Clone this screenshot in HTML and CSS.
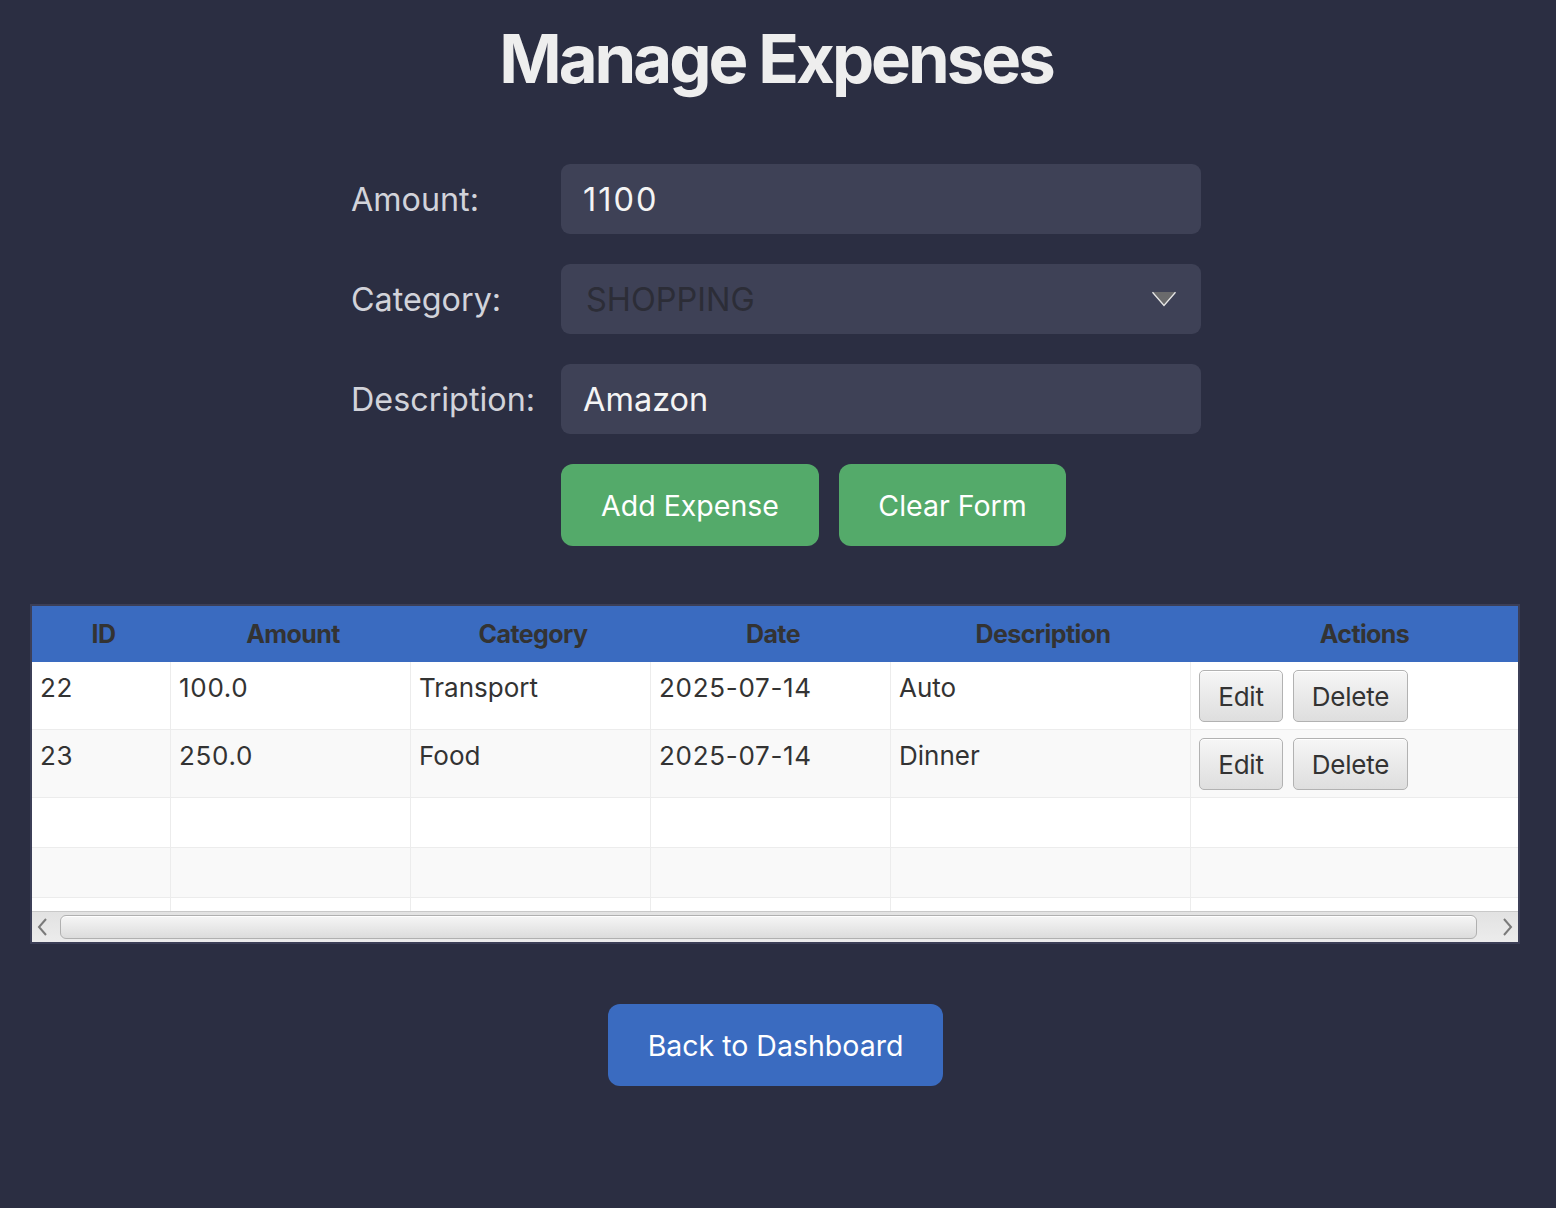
FILE: index.html
```html
<!DOCTYPE html>
<html lang="en">
<head>
<meta charset="utf-8">
<title>Manage Expenses</title>
<link rel="stylesheet" href="styles.css">
</head>
<body>
<main class="page">
  <h1 class="title">Manage Expenses</h1>

  <form class="form">
    <label class="label">Amount:</label>
    <div class="field"><span class="value num">1100</span></div>

    <label class="label">Category:</label>
    <div class="field select">
      <span class="placeholder">SHOPPING</span>
      <svg class="arrow" width="26" height="16" viewBox="0 0 26 16">
        <polygon points="1,1 25,1 13,15" fill="#6a6a6c"/>
        <polyline points="1.5,1.2 13,14.5 24.5,1.2" fill="none" stroke="#e6e6e6" stroke-width="1.3"/>
      </svg>
    </div>

    <label class="label">Description:</label>
    <div class="field"><span class="value">Amazon</span></div>

    <div class="actions-row">
      <button type="button" class="btn btn-green">Add Expense</button>
      <button type="button" class="btn btn-green">Clear Form</button>
    </div>
  </form>

  <section class="table">
    <div class="thead">
      <div class="th">ID</div>
      <div class="th">Amount</div>
      <div class="th">Category</div>
      <div class="th">Date</div>
      <div class="th">Description</div>
      <div class="th th-actions">Actions</div>
    </div>
    <div class="tbody">
      <div class="tr tall">
        <div class="td num">22</div>
        <div class="td num">100.0</div>
        <div class="td">Transport</div>
        <div class="td num">2025-07-14</div>
        <div class="td">Auto</div>
        <div class="td td-actions"><button type="button" class="cell-btn">Edit</button><button type="button" class="cell-btn">Delete</button></div>
      </div>
      <div class="tr tall odd">
        <div class="td num">23</div>
        <div class="td num">250.0</div>
        <div class="td">Food</div>
        <div class="td num">2025-07-14</div>
        <div class="td">Dinner</div>
        <div class="td td-actions"><button type="button" class="cell-btn">Edit</button><button type="button" class="cell-btn">Delete</button></div>
      </div>
      <div class="tr">
        <div class="td"></div><div class="td"></div><div class="td"></div><div class="td"></div><div class="td"></div><div class="td"></div>
      </div>
      <div class="tr odd">
        <div class="td"></div><div class="td"></div><div class="td"></div><div class="td"></div><div class="td"></div><div class="td"></div>
      </div>
      <div class="tr">
        <div class="td"></div><div class="td"></div><div class="td"></div><div class="td"></div><div class="td"></div><div class="td"></div>
      </div>
    </div>
    <div class="hscroll">
      <svg class="sarrow" width="12" height="20" viewBox="0 0 12 20"><polyline points="10,2 3,10 10,18" fill="none" stroke="#7a7a7a" stroke-width="2"/></svg>
      <div class="thumb"></div>
      <svg class="sarrow" width="12" height="20" viewBox="0 0 12 20"><polyline points="2,2 9,10 2,18" fill="none" stroke="#7a7a7a" stroke-width="2"/></svg>
    </div>
  </section>

  <div class="back-wrap">
    <button type="button" class="btn btn-blue">Back to Dashboard</button>
  </div>
</main>
</body>
</html>
```

FILE: styles.css
```css
* { box-sizing: border-box; }

html, body {
  margin: 0;
  padding: 0;
  background: #2b2e42;
  font-family: Inter, "Noto Sans", "Liberation Sans", sans-serif;
}

.page {
  width: 1556px;
  min-height: 1208px;
  display: flex;
  flex-direction: column;
  align-items: flex-start;
}

.title {
  align-self: center;
  margin: 18px 4px 64px 0;
  height: 82px;
  line-height: 82px;
  font-size: 67px;
  font-weight: 700;
  letter-spacing: -3px;
  color: #eeeeee;
}

.form {
  align-self: center;
  display: grid;
  grid-template-columns: 210px 640px;
  row-gap: 30px;
  padding-right: 4px;
  align-items: center;
}

.label {
  font-size: 32.3px;
  color: #d2d3da;
}

.field {
  height: 70px;
  background: #3e4156;
  border-radius: 9px;
  display: flex;
  align-items: center;
  padding-left: 22px;
  padding-right: 24px;
  font-size: 32.5px;
}

.value {
  color: #f4f4f4;
}

.value.num { letter-spacing: 2px; }

.select {
  padding-left: 25px;
  justify-content: space-between;
}

.placeholder {
  color: #2c2d37;
}

.arrow { display: block; }

.actions-row {
  grid-column: 2;
  display: flex;
  gap: 20px;
}

.btn {
  font-family: Inter, "Noto Sans", "Liberation Sans", sans-serif;
  font-size: 28.5px;
  color: #ffffff;
  border: none;
  border-radius: 12px;
  height: 82px;
  padding: 0;
  cursor: pointer;
}

.btn-green { background: #54aa6a; }
.actions-row .btn:first-child { width: 258px; }
.actions-row .btn:last-child { width: 227px; }

.btn-blue {
  background: #3a6bc0;
  width: 335px;
}

.table {
  margin: 58px 0 0 30px;
  width: 1490px;
  border: 2px solid #3c3f57;
  background: #ffffff;
  display: flex;
  flex-direction: column;
}

.thead, .tr {
  display: grid;
  grid-template-columns: 139px 240px 240px 240px 300px 327px;
}

.thead {
  height: 56px;
  background: #3a6bc0;
}

.th {
  display: flex;
  align-items: center;
  justify-content: center;
  padding-left: 4px;
  font-size: 25px;
  font-weight: 700;
  color: #333333;
  letter-spacing: -0.6px;
}

.th-actions { padding-left: 20px; }

.tbody {
  height: 249px;
  overflow: hidden;
}

.tr {
  height: 50px;
  background: #ffffff;
  border-bottom: 1px solid #ececec;
}

.tr.tall { height: 68px; }
.tr.odd { background: #f9f9f9; }

.td {
  border-right: 1px solid #ececec;
  padding: 10px 0 0 8px;
  font-size: 26px;
  color: #333333;
  white-space: nowrap;
}

.td.num { letter-spacing: 0.7px; }

.td:last-child { border-right: none; }

.td-actions {
  padding: 8px 0 0 8px;
  display: flex;
  align-items: flex-start;
  gap: 10px;
}

.cell-btn {
  height: 52px;
  padding: 0;
  font-family: Inter, "Noto Sans", "Liberation Sans", sans-serif;
  font-size: 26px;
  color: #333333;
  border: 1px solid #b2b2b2;
  border-radius: 5px;
  background: linear-gradient(#f6f6f6, #dedede);
  box-shadow: inset 0 1px 0 #ffffff;
  letter-spacing: -0.2px;
}

.cell-btn:first-child { width: 84px; }
.cell-btn:last-child { width: 115px; }

.hscroll {
  height: 31px;
  background: linear-gradient(#e2e2e2, #ececec);
  border-top: 1px solid #c9c9c9;
  display: flex;
  align-items: center;
  padding: 0 4px;
  gap: 10px;
}

.sarrow { display: block; flex: none; }

.thumb {
  flex: 1;
  height: 24px;
  border: 1px solid #b0b0b0;
  border-radius: 6px;
  background: linear-gradient(#f6f6f6, #dcdcdc);
  box-shadow: inset 0 1px 0 #ffffff;
  margin: 0 15px 0 2px;
}

.back-wrap {
  align-self: center;
  margin-top: 60px;
  margin-right: 5px;
}
```
